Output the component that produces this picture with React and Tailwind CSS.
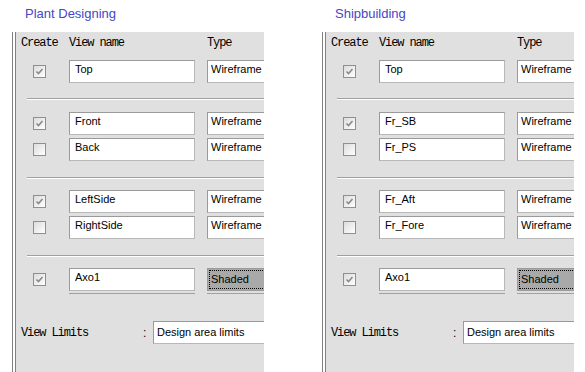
import React from 'react';

const mono = { fontFamily: '"Liberation Mono", "DejaVu Sans Mono", monospace' };

const Check = ({ checked }) => (
    <div className="ml-[17px] w-[13px] h-[13px] shrink-0 border border-[#8e8f8f] bg-gradient-to-br from-[#dcdcdc] to-white flex items-center justify-center">
        {checked && (
            <svg width="9" height="9" viewBox="0 0 9 9">
                <path d="M1.5 4.5 L3.5 6.5 L7.5 2" stroke="#8a8a8a" strokeWidth="1.6" fill="none" />
            </svg>
        )}
    </div>
);

const Field = ({ children, className = '' }) => (
    <div className={`h-[23px] shrink-0 bg-white border border-t-[#9a9a9a] border-l-[#9a9a9a] border-b-[#b8b8b8] border-r-[#b8b8b8] text-[11px] leading-[17px] text-black whitespace-nowrap overflow-hidden ${className}`}>
        {children}
    </div>
);

const Row = ({ checked, name, shaded, underline, className = '' }) => (
    <div className={`flex flex-col ${className}`}>
        <div className="flex items-center h-[23px]">
            <Check checked={checked} />
            <Field className="ml-[23px] w-[126px] pl-[5px]">{name}</Field>
            {shaded ? (
                <div className="ml-[12px] w-[70px] h-[23px] shrink-0 border border-[#9a9a9a] bg-[#a9a9a9] p-px">
                    <div className="h-full border border-dotted border-black text-[11px] leading-[16px] pl-px">Shaded</div>
                </div>
            ) : (
                <Field className="ml-[12px] w-[70px] pl-[3px]">Wireframe</Field>
            )}
        </div>
        {underline && (
            <div className="flex mt-[2px]">
                <div className="ml-[53px] w-[126px] h-px shrink-0 bg-[#a0a0a0]" />
                <div className="ml-[12px] w-[70px] h-px shrink-0 bg-[#a0a0a0]" />
            </div>
        )}
    </div>
);

const Sep = ({ className = '' }) => (
    <div className={`ml-[11px] flex flex-col ${className}`}>
        <div className="h-px bg-[#a0a0a0]" />
        <div className="h-px bg-white" />
    </div>
);

const Panel = ({ title, names }) => (
    <div className="w-[310px] shrink-0 flex flex-col">
        <div className="pl-[25px] pt-[6px] text-[13px] leading-[15px] text-[#4646c8]" style={{ fontFamily: '"Liberation Sans", Arial, sans-serif' }}>
            {title}
        </div>
        <div className="mt-[11px] ml-[12px] w-[252px] h-[340px] flex">
            <div className="w-px bg-[#808080]" />
            <div className="w-[2px] bg-white" />
            <div className="w-px bg-[#808080]" />
            <div className="flex-1 bg-[#e0e0e0] overflow-hidden flex flex-col" style={{ fontFamily: '"Liberation Sans", Arial, sans-serif' }}>
                <div className="mt-[4px] h-[14px] flex text-[12px] leading-[14px] tracking-[-1.1px] text-black whitespace-nowrap" style={mono}>
                    <span className="ml-[5px] w-[48px] shrink-0">Create</span>
                    <span className="w-[138px] shrink-0">View name</span>
                    <span className="shrink-0">Type</span>
                </div>
                <Row className="mt-[10px]" checked name={names[0]} />
                <Sep className="mt-[15px]" />
                <Row className="mt-[12px]" checked name={names[1]} />
                <Row className="mt-[3px]" name={names[2]} />
                <Sep className="mt-[16px]" />
                <Row className="mt-[11px]" checked name={names[3]} />
                <Row className="mt-[3px]" name={names[4]} />
                <Sep className="mt-[16px]" />
                <Row className="mt-[11px]" checked name="Axo1" shaded underline />
                <div className="mt-[27px] flex items-center h-[23px] whitespace-nowrap">
                    <span className="ml-[5px] w-[122px] shrink-0 text-[12px] tracking-[-1.1px] text-black" style={mono}>View Limits</span>
                    <span className="text-[12px] w-[10px] shrink-0">:</span>
                    <Field className="w-[140px] pl-[3px] leading-[20px]">Design area limits</Field>
                </div>
            </div>
        </div>
    </div>
);

export default function App() {
    return (
        <div className="w-[585px] h-[372px] bg-white flex overflow-hidden">
            <Panel title="Plant Designing" names={['Top', 'Front', 'Back', 'LeftSide', 'RightSide']} />
            <Panel title="Shipbuilding" names={['Top', 'Fr_SB', 'Fr_PS', 'Fr_Aft', 'Fr_Fore']} />
        </div>
    );
}
